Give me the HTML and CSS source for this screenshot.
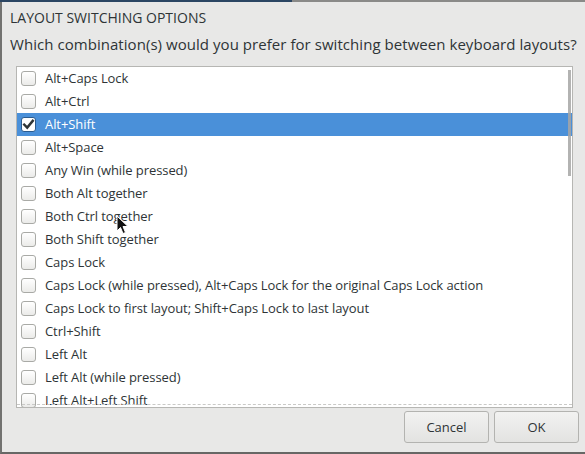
FILE: index.html
```
<!DOCTYPE html>
<html>
<head>
<meta charset="utf-8">
<link rel="stylesheet" href="styles.css">
</head>
<body>
<div class="topbar"><div class="top-a"></div><div class="top-b"></div></div>
<div class="frame">
  <div class="main">
    <div class="title">LAYOUT SWITCHING OPTIONS</div>
    <div class="question">Which combination(s) would you prefer for switching between keyboard layouts?</div>
    <div class="list">
      <div class="rows">
        <div class="row"><span class="cb"></span><span class="lbl">Alt+Caps Lock</span></div>
        <div class="row"><span class="cb"></span><span class="lbl">Alt+Ctrl</span></div>
        <div class="row sel"><span class="cb on"><svg viewBox="0 0 15 15" width="15" height="15"><path d="M3.2 7.6 L6.2 10.6 L11.8 3.8" fill="none" stroke="#2e3436" stroke-width="2.4" stroke-linecap="square"/></svg></span><span class="lbl">Alt+Shift</span></div>
        <div class="row"><span class="cb"></span><span class="lbl">Alt+Space</span></div>
        <div class="row"><span class="cb"></span><span class="lbl">Any Win (while pressed)</span></div>
        <div class="row"><span class="cb"></span><span class="lbl">Both Alt together</span></div>
        <div class="row"><span class="cb"></span><span class="lbl">Both Ctrl together</span></div>
        <div class="row"><span class="cb"></span><span class="lbl">Both Shift together</span></div>
        <div class="row"><span class="cb"></span><span class="lbl">Caps Lock</span></div>
        <div class="row"><span class="cb"></span><span class="lbl">Caps Lock (while pressed), Alt+Caps Lock for the original Caps Lock action</span></div>
        <div class="row"><span class="cb"></span><span class="lbl">Caps Lock to first layout; Shift+Caps Lock to last layout</span></div>
        <div class="row"><span class="cb"></span><span class="lbl">Ctrl+Shift</span></div>
        <div class="row"><span class="cb"></span><span class="lbl">Left Alt</span></div>
        <div class="row"><span class="cb"></span><span class="lbl">Left Alt (while pressed)</span></div>
        <div class="row"><span class="cb"></span><span class="lbl">Left Alt+Left Shift</span></div>
      </div>
      <div class="undershoot"></div>
      <div class="scrollbar"></div>
    </div>
    <div class="buttons">
      <button class="btn">Cancel</button>
      <button class="btn">OK</button>
    </div>
  </div>
</div>
<svg class="cursor" width="13" height="20" viewBox="0 0 13 20"><path d="M1 1 L1 16 L4.5 12.5 L7 18.5 L9.5 17.5 L7 11.5 L12 11.5 Z" fill="#111" stroke="#fff" stroke-width="1"/></svg>
</body>
</html>
```
FILE: styles.css
```
html, body {
  margin: 0;
  padding: 0;
}
body {
  width: 585px;
  height: 454px;
  overflow: hidden;
  background: #e8e8e7;
  font-family: "Open Sans", "Noto Sans", sans-serif;
  color: #2e3436;
  position: relative;
}
.topbar {
  display: flex;
  height: 2px;
}
.top-a {
  width: 292px;
  background: #2b4663;
}
.top-b {
  flex: 1;
  background: #8a8a88;
}
.frame {
  height: 450px;
  border-left: 2px solid #727270;
  border-bottom: 2px solid #676765;
  box-sizing: content-box;
}
.main {
  display: flex;
  flex-direction: column;
  padding-left: 8px;
}
.title {
  margin-top: 7px;
  height: 18px;
  line-height: 18px;
  font-size: 14px;
  letter-spacing: 0;
}
.question {
  margin-top: 7px;
  height: 21px;
  line-height: 21px;
  font-size: 15px;
  letter-spacing: 0.05px;
}
.list {
  position: relative;
  margin-top: 11px;
  margin-left: 6px;
  width: 557px;
  height: 342px;
  box-sizing: border-box;
  border: 1px solid #b6b6b3;
  background: #fff;
  overflow: hidden;
}
.rows {
  display: flex;
  flex-direction: column;
}
.row {
  display: flex;
  align-items: center;
  height: 23px;
  flex: none;
  font-size: 13px;
}
.row.sel {
  background: #4a90d9;
  color: #fff;
}
.cb {
  width: 15px;
  height: 15px;
  box-sizing: border-box;
  margin-left: 4px;
  margin-right: 9px;
  border: 1px solid #a9aaa6;
  border-radius: 3px;
  background: linear-gradient(#ffffff, #ebebe9);
  flex: none;
  position: relative;
}
.cb.on {
  border-color: #2a5b8f;
  background: #ffffff;
}
.cb svg {
  position: absolute;
  left: -1px;
  top: -1px;
}
.lbl {
  white-space: nowrap;
  letter-spacing: -0.07px;
  margin-bottom: 2px;
}
.undershoot {
  position: absolute;
  left: 0;
  right: 0;
  bottom: 2px;
  border-top: 1px dashed #c9c9c7;
}
.scrollbar {
  position: absolute;
  top: 3px;
  right: 1px;
  width: 3px;
  height: 106px;
  background: #a6a6a4;
  opacity: 0.85;
}
.buttons {
  display: flex;
  justify-content: flex-end;
  gap: 5px;
  margin-top: 3px;
  margin-right: 6px;
}
.btn {
  width: 85px;
  height: 32px;
  border: 1px solid #b3b3b0;
  border-radius: 3px;
  background: linear-gradient(#f2f2f1, #e3e3e1);
  font-family: "Open Sans", "Noto Sans", sans-serif;
  font-size: 13px;
  color: #2e3436;
  padding: 0;
}
.cursor {
  position: absolute;
  left: 116px;
  top: 215px;
}
```
